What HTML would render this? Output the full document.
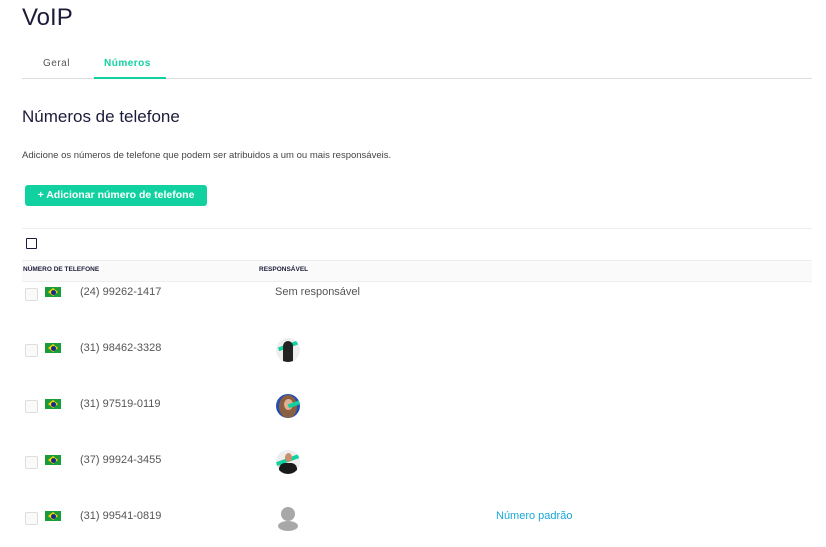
<!DOCTYPE html>
<html><head><style>
body{margin:0;width:826px;height:547px;background:#fff;font-family:"Liberation Sans",sans-serif;position:relative;overflow:hidden;color:#1c1c3a}
.a{position:absolute}
.cb{position:absolute;left:25px;width:11px;height:11px;border:1px solid #ddd;border-radius:2px;background:#fafafa}
.flag{position:absolute;left:45px;width:16px;height:10px;background:#1a9b3c}
.flag:before{content:"";position:absolute;left:3px;top:1px;width:10px;height:8px;background:#f6d500;clip-path:polygon(50% 0,100% 50%,50% 100%,0 50%)}
.flag:after{content:"";position:absolute;left:5.5px;top:2.5px;width:5px;height:5px;border-radius:50%;background:#1b2a8a}
.num{position:absolute;left:80px;font-size:11px;color:#555}
.av{position:absolute;left:276px;width:24px;height:24px;border-radius:50%;overflow:hidden}
</style></head><body>
<div class="a" style="left:22px;top:4px;font-size:24px;color:#1c1c3a">VoIP</div>
<div class="a" style="left:43px;top:58px;font-size:10px;letter-spacing:.5px;color:#555">Geral</div>
<div class="a" style="left:104px;top:58px;font-size:10px;letter-spacing:.5px;color:#12d1a0;font-weight:bold">Números</div>
<div class="a" style="left:22px;top:78px;width:790px;height:1px;background:#ddd"></div>
<div class="a" style="left:94px;top:77px;width:72px;height:2px;background:#12d1a0"></div>
<div class="a" style="left:22px;top:107px;font-size:17px;color:#1c1c3a">Números de telefone</div>
<div class="a" style="left:22px;top:150px;font-size:9.5px;color:#444">Adicione os números de telefone que podem ser atribuidos a um ou mais responsáveis.</div>
<div class="a" style="left:25px;top:185px;width:182px;height:21px;background:#12d1a0;border-radius:3px;color:#fff;font-size:10.5px;font-weight:bold;line-height:21px;text-align:center">+ Adicionar número de telefone</div>
<div class="a" style="left:22px;top:228px;width:790px;height:1px;background:#eee"></div>
<div class="a" style="left:26px;top:238px;width:9px;height:9px;border:1.5px solid #1c1c3a;border-radius:1px"></div>
<div class="a" style="left:22px;top:260px;width:790px;height:20px;background:#fafafa;border-top:1px solid #eee;border-bottom:1px solid #eee"></div>
<div class="a" style="left:23px;top:266px;font-size:6.5px;font-weight:bold;color:#1c1c3a">NÚMERO DE TELEFONE</div>
<div class="a" style="left:259px;top:266px;font-size:6.5px;font-weight:bold;color:#1c1c3a">RESPONSÁVEL</div>

<div class="cb" style="top:288px"></div><div class="flag" style="top:287px"></div><div class="num" style="top:286px">(24) 99262-1417</div>
<div class="a" style="left:275px;top:286px;font-size:11px;color:#555">Sem responsável</div>

<div class="cb" style="top:344px"></div><div class="flag" style="top:343px"></div><div class="num" style="top:342px">(31) 98462-3328</div>
<div class="av" style="top:338px;background:#eee"><div class="a" style="left:2px;top:6px;width:20px;height:4px;background:#12d1a0;transform:rotate(-20deg)"></div><div class="a" style="left:7px;top:3px;width:10px;height:22px;background:#222;border-radius:5px 5px 0 0"></div></div>

<div class="cb" style="top:400px"></div><div class="flag" style="top:399px"></div><div class="num" style="top:398px">(31) 97519-0119</div>
<div class="av" style="top:394px;background:#2450b0"><div class="a" style="left:3px;top:1px;width:18px;height:23px;background:#8a6040;border-radius:50%"></div><div class="a" style="left:8px;top:5px;width:9px;height:11px;background:#e0b090;border-radius:50%"></div><div class="a" style="left:12px;top:8px;width:14px;height:4px;background:#12d1a0;transform:rotate(-20deg)"></div></div>

<div class="cb" style="top:456px"></div><div class="flag" style="top:455px"></div><div class="num" style="top:454px">(37) 99924-3455</div>
<div class="av" style="top:450px;background:#eee"><div class="a" style="left:0;top:8px;width:24px;height:4px;background:#12d1a0;transform:rotate(-20deg)"></div><div class="a" style="left:9px;top:3px;width:7px;height:9px;background:#c89070;border-radius:50%"></div><div class="a" style="left:3px;top:13px;width:18px;height:12px;background:#1a1a1a;border-radius:6px 6px 0 0"></div></div>

<div class="cb" style="top:512px"></div><div class="flag" style="top:511px"></div><div class="num" style="top:510px">(31) 99541-0819</div>
<div class="a" style="left:281px;top:507px;width:14px;height:14px;border-radius:50%;background:#a8a8a8"></div>
<div class="a" style="left:278px;top:521px;width:20px;height:10px;border-radius:50%;background:#a8a8a8"></div>
<div class="a" style="left:496px;top:510px;font-size:11px;color:#18a8d8">Número padrão</div>
</body></html>
